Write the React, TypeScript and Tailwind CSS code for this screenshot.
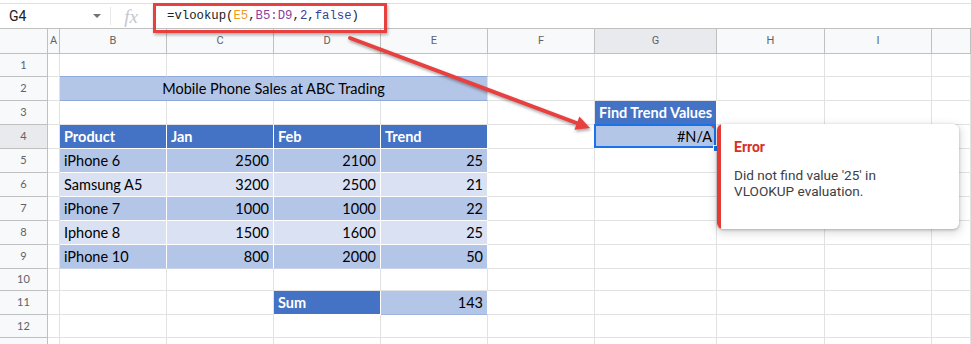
import React from "react";

const W = [
  "w-[48px]",
  "w-[12px]",
  "w-[107px]",
  "w-[107px]",
  "w-[107px]",
  "w-[107px]",
  "w-[107px]",
  "w-[122px]",
  "w-[108px]",
  "w-[107px]",
  "flex-1",
];
const LETTERS = ["", "A", "B", "C", "D", "E", "F", "G", "H", "I", ""];

const grid = "border-[#e2e2e2]";
const dark = "bg-[#b4c6e7] border-white";
const light = "bg-[#d9e1f2] border-white";
const head = "bg-[#4472c4] border-white text-white font-bold";

type Spec = { t?: string; cls?: string; right?: boolean };

function Cell({ w, cls = grid, right, children }: { w: string; cls?: string; right?: boolean; children?: React.ReactNode }) {
  return (
    <div
      className={`${w} shrink-0 h-full border-r border-b flex items-center px-[4px] whitespace-nowrap overflow-hidden ${
        right ? "justify-end" : ""
      } ${cls}`}
    >
      {children}
    </div>
  );
}

function RowHead({ n, active }: { n: number; active?: boolean }) {
  return (
    <div
      className={`w-[48px] shrink-0 h-full border-r border-b border-[#c0c0c0] flex items-center justify-center text-[11px] text-[#5f6368] ${
        active ? "bg-[#e8eaed]" : "bg-[#f8f9fa]"
      }`}
    >
      {n}
    </div>
  );
}

const products: [string, string, string, string][] = [
  ["iPhone 6", "2500", "2100", "25"],
  ["Samsung A5", "3200", "2500", "21"],
  ["iPhone 7", "1000", "1000", "22"],
  ["Iphone 8", "1500", "1600", "25"],
  ["iPhone 10", "800", "2000", "50"],
];

// row number -> B..J cells (index 2..10 in W)
function specsFor(r: number): Record<number, Spec> {
  if (r === 1) {
    return {
      2: { cls: "border-r-[#e2e2e2] border-b-[#8eaadb]" },
      3: { cls: "border-r-[#e2e2e2] border-b-[#8eaadb]" },
      4: { cls: "border-r-[#e2e2e2] border-b-[#8eaadb]" },
      5: { cls: "border-r-[#e2e2e2] border-b-[#8eaadb]" },
    };
  }
  if (r === 3) return { 7: { t: "Find Trend Values", cls: head } };
  if (r === 4) {
    return {
      2: { t: "Product", cls: head },
      3: { t: "Jan", cls: head },
      4: { t: "Feb", cls: head },
      5: { t: "Trend", cls: head },
    };
  }
  if (r >= 5 && r <= 9) {
    const p = products[r - 5];
    const bg = r % 2 === 1 ? dark : light;
    const last = r === 9 ? " border-b-[#c9d4ea]" : "";
    return {
      2: { t: p[0], cls: bg + last },
      3: { t: p[1], cls: bg + last, right: true },
      4: { t: p[2], cls: bg + last, right: true },
      5: { t: p[3], cls: bg + last, right: true },
    };
  }
  if (r === 11) {
    return {
      4: { t: "Sum", cls: head },
      5: { t: "143", cls: "bg-[#b4c6e7] border-r-white border-b-[#9fb4de]", right: true },
    };
  }
  return {};
}

const heights: Record<number, string> = {
  1: "h-[23px]",
  2: "h-[24px]",
  3: "h-[24px]",
  4: "h-[24px]",
  5: "h-[24px]",
  6: "h-[24px]",
  7: "h-[24px]",
  8: "h-[24px]",
  9: "h-[24px]",
  10: "h-[22px]",
  11: "h-[24px]",
  12: "h-[23px]",
  13: "h-[24px]",
};

function SheetRow({ r }: { r: number }) {
  const specs = specsFor(r);
  const cells: React.ReactNode[] = [];
  for (let c = 1; c < W.length; c++) {
    if (r === 2 && c === 2) {
      cells.push(
        <div
          key={c}
          className="w-[428px] shrink-0 h-full border-r border-b border-r-[#e2e2e2] border-b-[#8eaadb] bg-[#b4c6e7] flex items-center justify-center whitespace-nowrap"
        >
          Mobile Phone Sales at ABC Trading
        </div>
      );
      c = 5;
      continue;
    }
    if (r === 4 && c === 7) {
      cells.push(
        <div
          key={c}
          className="relative w-[122px] shrink-0 h-full border-r border-b border-white bg-[#b4c6e7] flex items-center justify-end px-[4px]"
        >
          #N/A
          <div className="absolute top-0 right-0 w-0 h-0 border-l-[6px] border-l-transparent border-t-[6px] border-t-[#ea4335]" />
          <div className="absolute -left-px -top-px w-[calc(100%+1px)] h-[calc(100%+1px)] border-2 border-[#1a73e8]" />
          <div className="absolute -right-[4px] -bottom-[4px] w-[7px] h-[7px] bg-[#1a73e8] border border-white" />
        </div>
      );
      continue;
    }
    const s = specs[c];
    cells.push(
      <Cell key={c} w={W[c]} cls={s?.cls ?? grid} right={s?.right}>
        {s?.t}
      </Cell>
    );
  }
  return (
    <div className={`flex ${heights[r]}`}>
      <RowHead n={r} active={r === 4} />
      {cells}
    </div>
  );
}

function FormulaBar() {
  return (
    <div className="mt-[3px] h-[26px] border-t border-b border-t-[#e0e0e0] border-b-[#c0c0c0] flex items-center font-['Roboto',sans-serif]">
      <div className="w-[110px] h-full flex items-center justify-between pl-[9px] pr-[9px] text-[14px] text-[#202124]">
        <span>G4</span>
        <span className="w-0 h-0 border-l-[4px] border-r-[4px] border-t-[4px] border-l-transparent border-r-transparent border-t-[#6f7378]" />
      </div>
      <div className="w-px h-[18px] bg-[#e8e8e8]" />
      <div className="w-[40px] flex justify-center font-['Liberation_Serif',serif] italic text-[19px] text-[#c4c7cc] leading-none">
        fx
      </div>
      <div className="pl-[16px] font-['Liberation_Mono',monospace] text-[12.3px] text-[#202124] whitespace-nowrap">
        =vlookup(<span className="text-[#f29a1a]">E5</span>,<span className="text-[#8e3fa0]">B5:D9</span>,
        <span className="text-[#34449a]">2</span>,<span className="text-[#34449a]">false</span>)
      </div>
    </div>
  );
}

function ColumnHeaders() {
  return (
    <div className="flex h-[25px] font-['Roboto',sans-serif]">
      {W.map((w, i) => (
        <div
          key={i}
          className={`${w} shrink-0 h-full border-r border-b border-[#c0c0c0] flex items-center justify-center text-[11px] text-[#5f6368] ${
            i === 7 ? "bg-[#e8eaed]" : "bg-[#f8f9fa]"
          }`}
        >
          {LETTERS[i]}
        </div>
      ))}
    </div>
  );
}

function ErrorPopup() {
  return (
    <div className="absolute left-[717px] top-[124px] w-[242px] h-[105px] bg-white rounded-[6px] overflow-hidden flex shadow-[0_1px_3px_rgba(0,0,0,0.25),0_3px_8px_2px_rgba(0,0,0,0.12)] font-['Roboto',sans-serif]">
      <div className="w-[4px] h-full bg-[#e53935]" />
      <div className="pl-[13px] pt-[13px]">
        <div className="text-[14px] font-bold text-[#d93025]">Error</div>
        <div className="mt-[9px] text-[13.6px] leading-[16px] text-[#3c4043]">
          Did not find value '25' in
          <br />
          VLOOKUP evaluation.
        </div>
      </div>
    </div>
  );
}

function Annotations() {
  return (
    <>
      <div className="absolute left-[153px] top-[3px] w-[234px] h-[30px] border-[3px] border-[#e8403f] shadow-[1px_2px_3px_rgba(0,0,0,0.3)]" />
      <svg
        className="absolute left-0 top-0 pointer-events-none drop-shadow-[1px_2px_1.5px_rgba(0,0,0,0.35)]"
        width="971"
        height="344"
        viewBox="0 0 971 344"
      >
        <line x1="350" y1="38" x2="578" y2="123.5" stroke="#e8403f" strokeWidth="3.8" strokeLinecap="round" />
        <polygon points="590,128 574.4,129.7 579.4,116.5" fill="#e8403f" />
      </svg>
    </>
  );
}

export default function App() {
  const rows = [1, 2, 3, 4, 5, 6, 7, 8, 9, 10, 11, 12, 13];
  return (
    <div className="relative w-[971px] h-[344px] overflow-hidden bg-white">
      <FormulaBar />
      <ColumnHeaders />
      <div className="font-['Lato',sans-serif] text-[14.5px] text-black">
        {rows.map((r) => (
          <SheetRow key={r} r={r} />
        ))}
      </div>
      <ErrorPopup />
      <Annotations />
    </div>
  );
}
